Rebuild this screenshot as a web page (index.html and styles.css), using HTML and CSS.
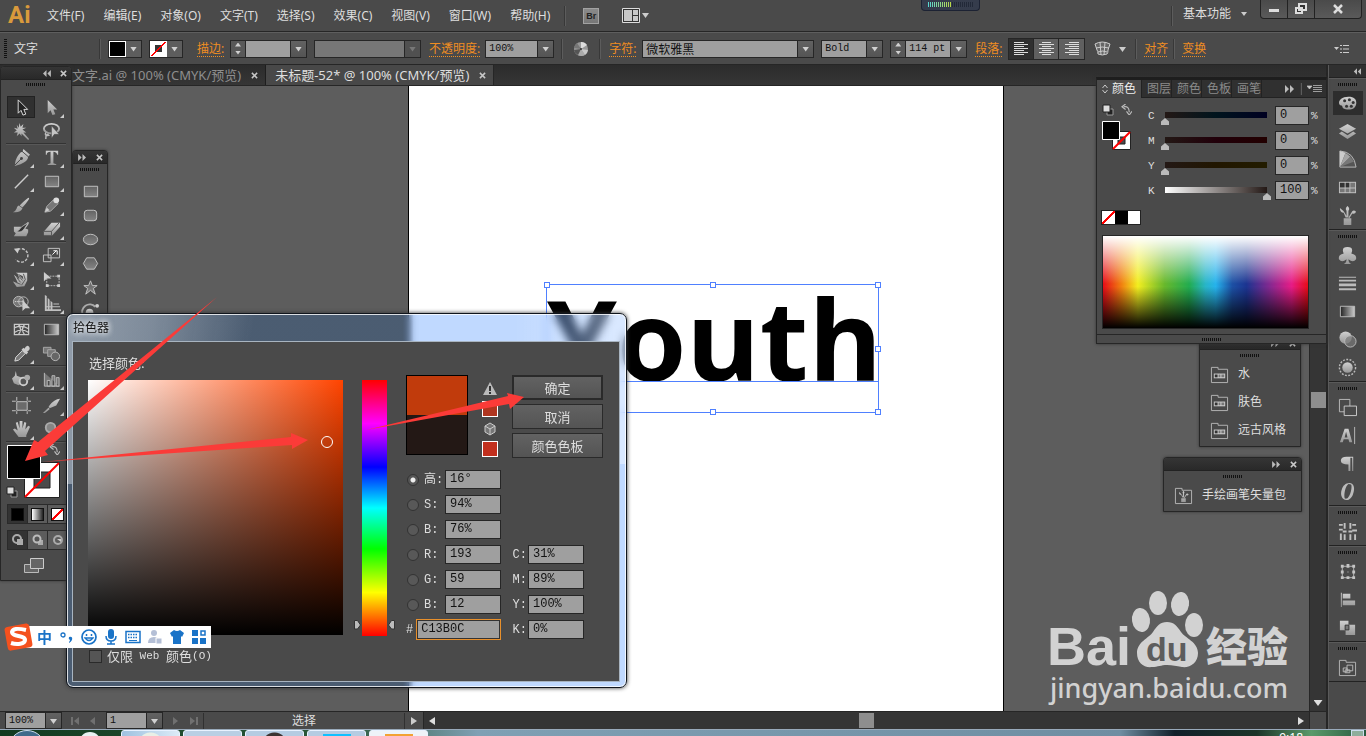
FILE: index.html
```html
<!DOCTYPE html>
<html lang="zh-CN">
<head>
<meta charset="utf-8">
<title>未标题-52* @ 100% (CMYK/预览)</title>
<link rel="stylesheet" href="styles.css">
</head>
<body>
<svg class="sprite" aria-hidden="true">
  <defs>
    <linearGradient id="g" x1="0" y1="0" x2="0" y2="1"><stop offset="0" stop-color="#d0d0d0"/><stop offset="1" stop-color="#979797"/></linearGradient>
    <linearGradient id="gh"><stop offset="0" stop-color="#222"/><stop offset="1" stop-color="#ccc"/></linearGradient>
    <linearGradient id="shade" x1="0" y1="0" x2="0" y2="1"><stop offset="0" stop-color="#626262"/><stop offset="1" stop-color="#858585"/></linearGradient>
  </defs>
  <symbol id="select" viewBox="0 0 20 20"><path d="M6.500 2v14l3-3 2 5 3-1-2-5h4z" fill="#222" stroke="#ddd"/></symbol>
  <symbol id="direct" viewBox="0 0 20 20"><path d="M6 2v14l3-3 2 5 3-1-2-5h4z" fill="url(#g)"/></symbol>
  <symbol id="wand" viewBox="0 0 20 20"><path d="M8 1l1 4 3-3-1 4h4l-4 2 4 3-3 0 6 7-1 1-7-7 0 3-2-3-3 3 1-4H2l3-2-3-3 4 1-1-4 2 3z" fill="url(#g)"/></symbol>
  <symbol id="lasso" viewBox="0 0 20 20"><ellipse cx="10" cy="7" rx="8" ry="5" fill="none" stroke="url(#g)" stroke-width="2"/><path d="M4 11q-2 4 3 3-3-3-3 4" fill="none" stroke="#bbb" stroke-width="1.500"/><path d="M10 4v13l3-4h5z" fill="#c4c4c4" stroke="#444" stroke-width=".5"/></symbol>
  <symbol id="pen" viewBox="0 0 20 20"><path d="M12 1l7 6-2 2q0 5-8 8l-6 2q0-7 4-12 2-3 4-3z" fill="url(#g)"/><path d="M3 18l7-7M10 3l7 6" stroke="#444"/><circle cx="10" cy="11" r="1.500" fill="#444"/></symbol>
  <symbol id="type" viewBox="0 0 20 20"><path d="M4 3h13v4h-1q-1-3-4-3v12l3 1v1H6v-1l3-1V4q-4 0-4 3H4z" fill="url(#g)"/></symbol>
  <symbol id="line" viewBox="0 0 20 20"><path d="M3 17L17 3" stroke="#ccc" stroke-width="1.500"/></symbol>
  <symbol id="rect" viewBox="0 0 20 20"><path d="M3.500 4.500h14v11h-14z" fill="url(#shade)" stroke="#c4c4c4"/></symbol>
  <symbol id="brush" viewBox="0 0 20 20"><path d="M18 2q1 1-7 10l-3-2Q17 1 18 2zM7 10l4 3q-2 5-10 4 3-1 4-4 0-2 2-3z" fill="url(#g)"/></symbol>
  <symbol id="pencil" viewBox="0 0 20 20"><path d="M3 17l2-6 7-7 5 4-8 8z" fill="#777" stroke="#aaa"/><circle cx="15" cy="4.500" r="3" fill="#ddd"/><path d="M3 17l2-5 3 3z" fill="#ccc"/></symbol>
  <symbol id="blob" viewBox="0 0 20 20"><path d="M2 7h8l7-5q2 1-3 7l3 1v3l-2 4H2l2-3-2-2z" fill="url(#g)"/><path d="M5 12q5 2 8-3l4-6q-8 4-10 8" fill="#333" stroke="#bbb" stroke-width=".7"/></symbol>
  <symbol id="eraser" viewBox="0 0 20 20"><path d="M2 12L10 3h9v4l-8 9H2z" fill="url(#g)"/><path d="M2 12h8l8-9M10 12v4" fill="none" stroke="#555"/></symbol>
  <symbol id="rotate" viewBox="0 0 20 20"><path d="M6 4A7 7 0 1 1 4 14" fill="none" stroke="#c4c4c4" stroke-width="1.500" stroke-dasharray="3 1.500"/><path d="M2 3l6-1-2 6z" fill="#ccc"/></symbol>
  <symbol id="scale" viewBox="0 0 20 20"><path d="M6.500 2.500h12v10h-12zM1.500 9.500h8v7h-8z" fill="none" stroke="#c4c4c4"/><path d="M11 9l4-4m-3 0h4v4" fill="none" stroke="#fff"/></symbol>
  <symbol id="warp" viewBox="0 0 20 20"><path d="M4 3h12v8l-3 6-8 1-4-6 5 2-1-3-3-6 6 5-2-6 6 6-1-5 3 3z" fill="url(#g)"/><path d="M7 6l4 5M5 8l4 5M4 13l5 2M12 4l2 6-4 6" stroke="#555" fill="none"/></symbol>
  <symbol id="freetrans" viewBox="0 0 20 20"><path d="M5 6.500h13v10H5z" fill="none" stroke="#bbb" stroke-dasharray="2 1"/><path d="M2 2v10l3-3h5z" fill="#ccc"/><path d="M4 15h3v3H4zM16 5h3v3h-3zM16 15h3v3h-3z" fill="#ccc"/></symbol>
  <symbol id="builder" viewBox="0 0 20 20"><circle cx="7" cy="8" r="5.500" fill="#777" stroke="#bbb"/><circle cx="12" cy="8" r="5" fill="none" stroke="#bbb"/><path d="M3 8h9" stroke="#eee" stroke-dasharray="1 1"/><path d="M11 6v12l3-3h5z" fill="#ccc"/></symbol>
  <symbol id="persp" viewBox="0 0 20 20"><path d="M3 1l2 1v16H3zM6 4l2 2v12H6zM9 7l2 2v9H9zM12 10h6v1h-6zM5 13h14v1H5zM3 16h17v2H3z" fill="#c0c0c0"/></symbol>
  <symbol id="mesh" viewBox="0 0 20 20"><path d="M2.500 4.500h15v11h-15zM3 8q7-3 14 1M3 13q7-5 14 0M7 5q4 5 0 10M13 5q-4 5 0 10" fill="none" stroke="#c8c8c8" stroke-width="1.300"/></symbol>
  <symbol id="gradient" viewBox="0 0 20 20"><path d="M2.500 4.500h15v11h-15z" fill="url(#gh)" stroke="#bbb"/></symbol>
  <symbol id="dropper" viewBox="0 0 20 20"><path d="M3 18l1-4 7-7 3 3-7 7z" fill="#777" stroke="#ddd"/><path d="M10 6l2-2 1 1q3-5 5-2t-2 5l1 1-2 2z" fill="#ccc"/></symbol>
  <symbol id="blend" viewBox="0 0 20 20"><path d="M1.500 3.500h8v6h-8z" fill="#777" stroke="#aaa"/><path d="M6 6h8v7H6z" fill="#777" stroke="#aaa"/><circle cx="14" cy="13" r="4.500" fill="#666" stroke="#bbb"/></symbol>
  <symbol id="bucket" viewBox="0 0 20 20"><path d="M4 1l1 5 5 2 2 5-5 3-5-2-2-5 3-3z" fill="url(#g)"/><circle cx="12" cy="12" r="4" fill="#555" stroke="#ccc" stroke-width="2"/><circle cx="16" cy="8" r="3" fill="#aaa"/></symbol>
  <symbol id="graph" viewBox="0 0 20 20"><path d="M2.500 3v14h16M5.500 11h3v6h-3zM10.500 6h3v11h-3zM15 8h3v9h-3z" fill="#777" stroke="#bbb"/></symbol>
  <symbol id="artboard" viewBox="0 0 20 20"><path d="M5 6h11v9H5zM5 1v4M16 1v4M5 16v3M16 16v3M0 5.500h4M17 5.500h3M0 15.500h4M17 15.500h3" fill="#6b6b6b" stroke="#c4c4c4"/></symbol>
  <symbol id="slice" viewBox="0 0 20 20"><path d="M19 3l-4 7-7 3-1-2q6-8 12-8zM7 12l1 2-5 4H1z" fill="url(#g)"/></symbol>
  <symbol id="hand" viewBox="0 0 20 20"><path d="M7 18L1 10l2-1 3 2-2-8 2-1 2 7V1h3v8l2-7 2 1-1 7 3-4 2 1-4 9v2z" fill="url(#g)"/></symbol>
  <symbol id="zoomtool" viewBox="0 0 20 20"><circle cx="9" cy="8" r="5" fill="#858585" stroke="#aaa" stroke-width="2"/><path d="M12 12l5 5" stroke="#aaa" stroke-width="2"/></symbol>
  <symbol id="rrect" viewBox="0 0 20 20"><rect x="3.500" y="4.500" width="13" height="11" rx="3" fill="url(#shade)" stroke="#c4c4c4"/></symbol>
  <symbol id="ellipse" viewBox="0 0 20 20"><ellipse cx="10" cy="10" rx="7.500" ry="5.500" fill="url(#shade)" stroke="#c4c4c4"/></symbol>
  <symbol id="hex" viewBox="0 0 20 20"><path d="M6 4h8l3.500 6-3.500 6H6l-3.500-6z" fill="url(#shade)" stroke="#c4c4c4"/></symbol>
  <symbol id="star" viewBox="0 0 20 20"><path d="M10 3l2 5h5l-4 3 2 6-5-4-5 4 2-6-4-3h5z" fill="url(#shade)" stroke="#c4c4c4"/></symbol>
  <symbol id="flare" viewBox="0 0 20 20"><circle cx="9" cy="11" r="4" fill="#ccc"/><path d="M2 14a8 8 0 0 1 13-9" fill="none" stroke="#aaa" stroke-width="2"/><circle cx="17" cy="4" r="2" fill="#ccc"/></symbol>
  <symbol id="palette" viewBox="0 0 20 20"><path d="M11 3c7 0 9 4 8 8-1 5-6 6-11 5s-2-4-5-4c-4-1-2-9 8-9z" fill="url(#g)"/><g fill="#333"><circle cx="7" cy="7" r="1.600"/><circle cx="12" cy="6" r="1.600"/><circle cx="16" cy="9" r="1.600"/><circle cx="14" cy="13" r="1.600"/><circle cx="9" cy="13" r="1.600"/></g></symbol>
  <symbol id="layers" viewBox="0 0 20 20"><path d="M10 2l9 5-9 5-9-5zM1 12l3-2 6 4 6-4 3 2-9 6z" fill="url(#g)"/></symbol>
  <symbol id="fan" viewBox="0 0 20 20"><path d="M2 1q15 1 17 17H2z" fill="#555" stroke="#bbb"/><path d="M2 18V1l6 2z" fill="#ccc"/><path d="M2 18L8 3l5 4z" fill="#a5a5a5"/><path d="M2 18L13 7l4 5z" fill="#777"/></symbol>
  <symbol id="grid" viewBox="0 0 20 20"><path d="M1 4h18v12H1z" fill="#c0c0c0"/><path d="M2 5h5v5H2zM8 5h4v5H8z" fill="#333"/><path d="M13 5h5v5h-5zM2 11h5v4H2zM8 11h4v4H8zM13 11h5v4h-5z" fill="#777"/></symbol>
  <symbol id="brushes" viewBox="0 0 20 20"><path d="M6 13h8v7H6zM8 12L6 7Q2 7 2 2q4 3 5 5l3 5zM9 12V5Q7 3 10 0q3 3 1 5v7zM11 12l3-5q2-4 5-1-1 3-4 2l-3 5z" fill="url(#g)"/></symbol>
  <symbol id="club" viewBox="0 0 20 20"><path d="M6 19q3-1 3-5-5 4-8 0-1-5 5-6-3-7 4-7t4 7q6 1 5 6-3 4-8 0 0 4 3 5z" fill="url(#g)"/></symbol>
  <symbol id="stroke" viewBox="0 0 20 20"><path d="M1 3h18v1H1zM1 6h18v2H1zM1 10h18v3H1zM1 15h18v2H1z" fill="#bbb"/></symbol>
  <symbol id="transp" viewBox="0 0 20 20"><circle cx="8" cy="8" r="6.500" fill="url(#g)"/><circle cx="13" cy="12" r="6" fill="#777" fill-opacity=".7" stroke="#bbb"/></symbol>
  <symbol id="appear" viewBox="0 0 20 20"><circle cx="10" cy="10" r="5.500" fill="url(#g)"/><circle cx="10" cy="10" r="8.500" fill="none" stroke="#bbb" stroke-width="1.500" stroke-dasharray="2 1.500"/></symbol>
  <symbol id="boards" viewBox="0 0 20 20"><path d="M1.500 1.500h11v13h-11z" fill="none" stroke="#bbb"/><path d="M6.500 8.500h13v10h-13z" fill="#4a4a4a" stroke="#ccc"/></symbol>
  <symbol id="char" viewBox="0 0 20 20"><path d="M2 17L7 3h4l4 14h-3l-1-3H6l-1 3zM7 12h3L8.500 6z" fill="url(#g)" fill-rule="evenodd"/><path d="M17.500 1v18" stroke="#bbb"/></symbol>
  <symbol id="para" viewBox="0 0 20 20"><path d="M9 3h7v15h-1V4h-2v14h-2v-7Q3 11 3 7t6-4z" fill="url(#g)"/></symbol>
  <symbol id="opentype" viewBox="0 0 20 20"><path fill-rule="evenodd" d="M12 1c5 0 6 6 4 11-1 4-4 7-7 7-5 0-7-6-5-11 1-4 4-7 8-7zm-1 1C8 4 6 12 7 17q1 1 3 0c3-2 5-11 4-14q-1-1-3-1z" fill="#bbb"/></symbol>
  <symbol id="sliders" viewBox="0 0 20 20"><path d="M1 3h4M1 8h4M3 12v7M7 1v6M5 10h4M7 13v6M13 1v6M11 10h4M13 13v6M15 3h4M15 9h5M18 13v6" stroke="#c0c0c0" stroke-width="2"/></symbol>
  <symbol id="transform" viewBox="0 0 20 20"><path d="M4.500 4.500h12v12h-12z" fill="none" stroke="#bbb"/><path d="M3 3h3v3H3zM9 2h3v4H9zM15 3h3v3h-3zM3 9h3v3H3zM15 9h3v3h-3zM3 15h3v3H3zM9 15h3v3H9zM15 15h3v3h-3zM10 10h1v1h-1z" fill="#c4c4c4"/></symbol>
  <symbol id="align" viewBox="0 0 20 20"><path d="M3 3h1v15H3zM5 4h8v5H5zM5 11h13v5H5z" fill="url(#g)"/></symbol>
  <symbol id="path" viewBox="0 0 20 20"><path d="M2 3h9v4h7v11H8v-5H2z" fill="url(#g)"/><path d="M7.500 7.500h4v5h-4z" fill="#777" stroke="#333"/></symbol>
  <symbol id="folder" viewBox="0 0 20 20"><path d="M1.500 18.500v-16h7v2h10v14z" fill="#484848" stroke="#b5b5b5"/></symbol>
  <symbol id="arrows-l" viewBox="0 0 10 8"><path d="M5 0v8L1 4zM10 0v8L6 4z" fill="#bbb"/></symbol>
  <symbol id="arrows-r" viewBox="0 0 10 8"><path d="M0 0v8l4-4zM5 0v8l4-4z" fill="#bbb"/></symbol>
  <symbol id="close" viewBox="0 0 8 8"><path d="M1 1l6 6M7 1L1 7" stroke="#c8c8c8" stroke-width="1.700"/></symbol>
  <symbol id="swap" viewBox="0 0 12 12"><path d="M3 3q6-1 6 6M5 0L1 3l4 3M6 8l3 4 3-4" fill="none" stroke="#bbb" stroke-width="1.300"/></symbol>
  <symbol id="default" viewBox="0 0 12 12"><path d="M5 5h6v6H5z" fill="#222" stroke="#999"/><path d="M1 1h7v7H1z" fill="#ddd" stroke="#222"/></symbol>
  <symbol id="menu" viewBox="0 0 16 10"><path d="M0 2h5L2.500 5zM6 1.500h9M6 3.500h9M6 5.500h9M6 7.500h9" fill="#ccc" stroke="#bbb" stroke-width=".8"/></symbol>
</svg>

<div class="app">
  <header class="menubar">
    <span class="logo">Ai</span>
    <nav class="menus">
      <button>文件(F)</button><button>编辑(E)</button><button>对象(O)</button><button>文字(T)</button><button>选择(S)</button><button>效果(C)</button><button>视图(V)</button><button>窗口(W)</button><button>帮助(H)</button>
    </nav>
    <i class="rule"></i>
    <button class="bridge">Br</button>
    <button class="arrange" aria-label="排列文档"><svg width="28" height="16"><path d="M.5.500h17v14H.5z" fill="#333" stroke="#ddd"/><path d="M2 2h8v11H2zM11 2h5v5h-5zM11 8h5v5h-5z" fill="#c8c8c8"/><path d="M20 5h7l-3.500 5z" fill="#ccc"/></svg></button>
    <span class="fill"></span>
    <i class="rule"></i>
    <button class="workspace">基本功能 <svg width="6" height="4"><path d="M0 0h6L3 4z" fill="#ccc"/></svg></button>
    <div class="winbtns">
      <button aria-label="最小化"><svg width="14" height="12"><path d="M2 6h10v3H2z" fill="#ddd"/></svg></button>
      <button aria-label="还原"><svg width="14" height="12"><path d="M5 1h7v6H5zM2 5h6v5H2z" fill="#333" stroke="#ddd" stroke-width="2"/></svg></button>
      <button class="wide" aria-label="关闭"><svg width="14" height="12"><path d="M3 2l8 8M11 2l-8 8" stroke="#ddd" stroke-width="2.500"/></svg></button>
    </div>
    <div class="meter"><i></i></div>
  </header>

  <section class="control">
    <i class="vgrip"></i>
    <span class="ctitle">文字</span>
    <i class="rule"></i>
    <button class="paint" aria-label="填色"><i class="chip black"></i><i class="drop"></i></button>
    <button class="paint" aria-label="描边颜色"><i class="chip none"></i><i class="drop"></i></button>
    <label class="lbl first" for="sw">描边:</label>
    <span class="spin"><i class="step"></i><span class="combo"><input id="sw" value=""></span></span>
    <span class="combo w107 off"><select aria-label="变量宽度" disabled><option></option></select></span>
    <label class="lbl" for="op">不透明度:</label>
    <span class="combo w68"><select id="op"><option>100%</option></select></span>
    <i class="rule"></i>
    <button class="wheel" aria-label="重新着色"><svg width="16" height="16" viewBox="0 0 16 16"><circle cx="8" cy="8" r="7" fill="#999"/><path d="M8 8L8 1a7 7 0 0 1 6 3z" fill="#ddd"/><path d="M8 8l7 1a7 7 0 0 1-3 5z" fill="#c8c8c8"/><path d="M8 8l4 6a7 7 0 0 1-7 0z" fill="#aaa"/><path d="M8 8l-3 6a7 7 0 0 1-4-5z" fill="#555"/><path d="M8 8L1 7a7 7 0 0 1 3-5z" fill="#777"/><circle cx="8" cy="8" r="1" fill="#333"/></svg></button>
    <i class="rule"></i>
    <label class="lbl" for="ff">字符:</label>
    <span class="combo w172 cjk"><select id="ff"><option>微软雅黑</option></select></span>
    <span class="combo w62"><select aria-label="字体样式"><option>Bold</option></select></span>
    <span class="spin"><i class="step"></i><span class="combo"><input aria-label="字体大小" value="114 pt"></span></span>
    <span class="lbl">段落:</span>
    <span class="aligns">
      <button class="on" aria-label="左对齐"><svg width="15" height="16"><path d="M0 1.500h10M0 3.500h14M0 5.500h10M0 7.500h14M0 9.500h10M0 11.500h14M0 13.500h10" stroke="#ddd"/></svg></button>
      <button aria-label="居中对齐"><svg width="15" height="16"><path d="M3 1.500h9M0 3.500h15M3 5.500h9M0 7.500h15M3 9.500h9M0 11.500h15M3 13.500h9" stroke="#ddd"/></svg></button>
      <button aria-label="右对齐"><svg width="15" height="16"><path d="M5 1.500h10M1 3.500h14M5 5.500h10M1 7.500h14M5 9.500h10M1 11.500h14M5 13.500h10" stroke="#ddd"/></svg></button>
    </span>
    <button class="envelope" aria-label="封套"><svg width="32" height="16"><path d="M1 3q7-4 15 0l-2 6q0 3-1 4-5 2-9 0 0-3-1-4zM2 7q6-2 13 0M4 11q5-2 9 0M6 1l1 13M11 1l-1 13" fill="#666" stroke="#ccc"/><path d="M25 6h7l-3.500 5z" fill="#ccc"/></svg></button>
    <i class="rule"></i>
    <a class="link" href="#align">对齐</a>
    <i class="rule tight"></i>
    <a class="link" href="#transform">变换</a>
    <span class="fill"></span>
    <button class="cmenu" aria-label="菜单"><svg width="16" height="10"><path d="M0 3h5L2.500 6z" fill="#ccc"/><path d="M6 1.500h2M9 1.500h6M6 5h2M9 5h6M6 8.500h2M9 8.500h6" stroke="#ccc"/></svg></button>
  </section>

  <main class="work">
    <div class="stage">
      <div class="tabs">
        <div class="tab old"><span>文字.ai @ 100% (CMYK/预览)</span><button aria-label="关闭"><svg width="7" height="7"><use href="#close"/></svg></button></div>
        <div class="tab"><span>未标题-52* @ 100% (CMYK/预览)</span><button aria-label="关闭"><svg width="7" height="7"><use href="#close"/></svg></button></div>
      </div>
      <div class="canvas">
        <div class="pasteboard">
          <div class="artboard">
            <div class="textbox"><span class="word">Youth</span><i class="base"></i><i class="h a"></i><i class="h b"></i><i class="h c"></i><i class="h d"></i><i class="h e"></i><i class="h f"></i><i class="h g"></i></div>
          </div>
          <svg class="mark" width="250" height="122" viewBox="0 0 250 122">
            <g fill="#d2d2d2">
              <text x="-1" y="77" class="mk-b">Bai</text>
              <g transform="translate(0 -18)">
                <ellipse cx="93" cy="50" rx="9" ry="12" transform="rotate(-8 93 50)"/><ellipse cx="110" cy="33" rx="9" ry="12"/><ellipse cx="132" cy="34" rx="9" ry="12" transform="rotate(8 132 34)"/><ellipse cx="146" cy="55" rx="9" ry="12"/>
                <path d="M119 52c7 0 10 4 14 10s17 10 17 21c0 10-8 15-16 14-6-1-9-2-15-2s-9 2-15 2c-8 1-15-4-15-14 0-11 12-15 16-21s7-10 14-10z"/>
              </g>
              <text x="158" y="74" class="mk-c">经验</text>
              <text x="2" y="110" class="mk-u">jingyan.baidu.com</text>
            </g>
            <text x="98" y="73" class="mk-d">du</text>
          </svg>
        </div>
        <div class="vscroll"><i class="thumb"></i><i class="down"></i></div>
      </div>
      <footer class="status">
        <span class="combo w57"><select aria-label="缩放"><option>100%</option></select></span>
        <button class="nav" aria-label="首个"><svg width="9" height="8"><path d="M0 0h2v8H0zM8 0v8L3 4z" fill="#707070"/></svg></button>
        <button class="nav" aria-label="上一个"><svg width="6" height="8"><path d="M5 0v8L0 4z" fill="#707070"/></svg></button>
        <span class="combo w57"><select aria-label="画板"><option>1</option></select></span>
        <button class="nav" aria-label="下一个"><svg width="6" height="8"><path d="M0 0v8l5-4z" fill="#707070"/></svg></button>
        <button class="nav" aria-label="末个"><svg width="9" height="8"><path d="M0 0v8l5-4zM6 0h2v8H6z" fill="#707070"/></svg></button>
        <span class="tip">选择</span>
        <button class="nav" aria-label="状态菜单"><svg width="6" height="8"><path d="M0 0v8l6-4z" fill="#ccc"/></svg></button>
        <div class="hscroll"><svg width="6" height="8"><path d="M6 0v8L0 4z" fill="#ddd"/></svg><i class="thumb"></i><svg width="6" height="8"><path d="M0 0v8l6-4z" fill="#ddd"/></svg></div>
        <i class="corner"></i>
      </footer>
    </div>

    <aside class="dock">
      <div class="dockhead"><svg width="8" height="7"><use href="#arrows-l"/></svg></div>
      <div class="dg"><i class="grip"></i>
        <button class="on" aria-label="颜色"><svg><use href="#palette"/></svg></button><button aria-label="图层"><svg><use href="#layers"/></svg></button><button aria-label="颜色参考"><svg><use href="#fan"/></svg></button><button aria-label="色板"><svg><use href="#grid"/></svg></button><button aria-label="画笔"><svg><use href="#brushes"/></svg></button></div>
      <div class="dg"><i class="grip"></i>
        <button aria-label="符号"><svg><use href="#club"/></svg></button><button aria-label="描边"><svg><use href="#stroke"/></svg></button><button aria-label="渐变"><svg><use href="#gradient"/></svg></button><button aria-label="透明度"><svg><use href="#transp"/></svg></button><button aria-label="外观"><svg><use href="#appear"/></svg></button></div>
      <div class="dg"><i class="grip"></i>
        <button aria-label="画板"><svg><use href="#boards"/></svg></button><button aria-label="字符"><svg><use href="#char"/></svg></button><button aria-label="段落"><svg><use href="#para"/></svg></button><button aria-label="OpenType"><svg><use href="#opentype"/></svg></button></div>
      <div class="dg"><i class="grip"></i><button aria-label="变量"><svg><use href="#sliders"/></svg></button></div>
      <div class="dg"><i class="grip"></i>
        <button aria-label="变换"><svg><use href="#transform"/></svg></button><button aria-label="对齐"><svg><use href="#align"/></svg></button><button aria-label="路径查找器"><svg><use href="#path"/></svg></button></div>
      <div class="dg"><i class="grip"></i><button aria-label="图形样式库"><svg viewBox="0 0 20 20"><use href="#folder"/><path d="M9.500 7.500h6v6h-6zM5.500 10.500h4v4h-4zM7.500 12.500h5v3h-5z" fill="none" stroke="#bbb"/></svg></button></div>
    </aside>

    <section class="panel shapes">
      <div class="phead"><svg width="9" height="7"><use href="#arrows-r"/></svg><svg width="7" height="7"><use href="#close"/></svg></div>
      <i class="grip"></i>
      <div class="shapelist"><button aria-label="矩形"><svg><use href="#rect"/></svg></button><button aria-label="圆角矩形"><svg><use href="#rrect"/></svg></button><button aria-label="椭圆"><svg><use href="#ellipse"/></svg></button><button aria-label="多边形"><svg><use href="#hex"/></svg></button><button aria-label="星形"><svg><use href="#star"/></svg></button><button aria-label="光晕"><svg><use href="#flare"/></svg></button></div>
    </section>

    <section class="panel tools">
      <div class="phead"><svg width="9" height="7"><use href="#arrows-l"/></svg><svg width="7" height="7"><use href="#close"/></svg></div>
      <i class="grip"></i>
      <div class="tg"><button class="on" aria-label="选择工具"><svg><use href="#select"/></svg></button><button class="m" aria-label="直接选择"><svg><use href="#direct"/></svg></button><button aria-label="魔棒"><svg><use href="#wand"/></svg></button><button aria-label="套索"><svg><use href="#lasso"/></svg></button></div>
      <div class="tg"><button class="m" aria-label="钢笔"><svg><use href="#pen"/></svg></button><button class="m" aria-label="文字工具"><svg><use href="#type"/></svg></button><button class="m" aria-label="直线段"><svg><use href="#line"/></svg></button><button class="m" aria-label="矩形工具"><svg><use href="#rect"/></svg></button><button aria-label="画笔工具"><svg><use href="#brush"/></svg></button><button class="m" aria-label="铅笔"><svg><use href="#pencil"/></svg></button><button aria-label="斑点画笔"><svg><use href="#blob"/></svg></button><button class="m" aria-label="橡皮擦"><svg><use href="#eraser"/></svg></button></div>
      <div class="tg"><button class="m" aria-label="旋转"><svg><use href="#rotate"/></svg></button><button class="m" aria-label="比例缩放"><svg><use href="#scale"/></svg></button><button class="m" aria-label="变形"><svg><use href="#warp"/></svg></button><button aria-label="自由变换"><svg><use href="#freetrans"/></svg></button><button class="m" aria-label="形状生成器"><svg><use href="#builder"/></svg></button><button class="m" aria-label="透视网格"><svg><use href="#persp"/></svg></button></div>
      <div class="tg"><button aria-label="网格"><svg><use href="#mesh"/></svg></button><button aria-label="渐变工具"><svg><use href="#gradient"/></svg></button><button class="m" aria-label="吸管"><svg><use href="#dropper"/></svg></button><button aria-label="混合"><svg><use href="#blend"/></svg></button></div>
      <div class="tg"><button class="m" aria-label="符号喷枪"><svg><use href="#bucket"/></svg></button><button class="m" aria-label="柱形图"><svg><use href="#graph"/></svg></button></div>
      <div class="tg"><button aria-label="画板工具"><svg><use href="#artboard"/></svg></button><button class="m" aria-label="切片"><svg><use href="#slice"/></svg></button><button class="m" aria-label="抓手"><svg><use href="#hand"/></svg></button><button aria-label="缩放工具"><svg><use href="#zoomtool"/></svg></button></div>
      <div class="fs"><svg width="58" height="56" viewBox="0 0 58 56"><path d="M18.500 18.500h35v35h-35zM28 28v16h16V28z" fill="#fff" stroke="#222" fill-rule="evenodd"/><path d="M19 53L53 19" stroke="#f00" stroke-width="2"/><path d="M1.500 1.500h33v33h-33z" fill="#000" stroke="#fff"/><use href="#swap" x="43" y="0" width="11" height="11"/><use href="#default" x="0" y="42" width="12" height="12"/></svg></div>
      <div class="modes"><button class="on" aria-label="颜色"><i class="mk"></i></button><button aria-label="渐变"><i class="mg"></i></button><button aria-label="无"><i class="mn"></i></button></div>
      <div class="modes"><button class="on" aria-label="正常绘图"><svg width="12" height="12"><circle cx="5" cy="5" r="4" fill="none" stroke="#aaa" stroke-width="2"/><path d="M5 5h6v6H5z" fill="#aaa"/></svg></button><button aria-label="背面绘图"><svg width="12" height="12"><path d="M6 6h5v5H6z" fill="#aaa"/><circle cx="5" cy="5" r="3.500" fill="#555" stroke="#bbb" stroke-width="2"/></svg></button><button aria-label="内部绘图"><svg width="12" height="12"><circle cx="6" cy="6" r="4" fill="none" stroke="#aaa" stroke-width="2"/><path d="M5 5h4v3z" fill="#ccc"/></svg></button></div>
      <button class="screen" aria-label="更改屏幕模式"><svg width="22" height="17"><path d="M1.500 7.500h14v8h-14z" fill="#666" stroke="#bbb"/><path d="M7.500 1.500h13v10h-13z" fill="#666" stroke="#ccc"/></svg></button>
    </section>

    <section class="panel lib1">
      <div class="phead"><svg width="9" height="7"><use href="#arrows-r"/></svg><svg width="7" height="7"><use href="#close"/></svg></div>
      <i class="grip"></i>
      <button><svg viewBox="0 0 20 20"><use href="#folder"/><path d="M4 9h12v5H4z" fill="#ccc"/><path d="M5 10h3v3H5z" fill="#333"/><path d="M9 10h2v3H9zM12 10h3v3h-3z" fill="#777"/></svg>水</button>
      <button><svg viewBox="0 0 20 20"><use href="#folder"/><path d="M4 9h12v5H4z" fill="#ccc"/><path d="M5 10h3v3H5z" fill="#333"/><path d="M9 10h2v3H9zM12 10h3v3h-3z" fill="#777"/></svg>肤色</button>
      <button><svg viewBox="0 0 20 20"><use href="#folder"/><path d="M4 9h12v5H4z" fill="#ccc"/><path d="M5 10h3v3H5z" fill="#333"/><path d="M9 10h2v3H9zM12 10h3v3h-3z" fill="#777"/></svg>远古风格</button>
    </section>

    <section class="panel lib2">
      <div class="phead"><svg width="9" height="7"><use href="#arrows-r"/></svg><svg width="7" height="7"><use href="#close"/></svg></div>
      <i class="grip"></i>
      <button><svg viewBox="0 0 20 20"><use href="#folder"/><use href="#brushes" x="4" y="5" width="12" height="12"/></svg>手绘画笔矢量包</button>
    </section>

    <section class="panel color">
      <div class="ptabs"><button class="on"><svg width="6" height="10"><path d="M.5 4L3 1l2.500 3M.5 6L3 9l2.500-3" fill="none" stroke="#ccc"/></svg>颜色</button><button>图层</button><button>颜色</button><button>色板</button><button>画笔</button><span class="pt-end"><svg width="10" height="8"><use href="#arrows-r"/></svg><i class="rule"></i><svg width="16" height="10"><use href="#menu"/></svg></span></div>
      <div class="cbody">
        <div class="cfs"><svg width="34" height="50" viewBox="0 0 34 50"><use href="#default" x="0" y="1" width="12" height="12"/><use href="#swap" x="19" y="1" width="11" height="11"/><path d="M10.500 28.500h18v18h-18zM16 34v7h7v-7z" fill="#fff" stroke="#222" fill-rule="evenodd"/><path d="M11 46l17-17" stroke="#f00" stroke-width="2"/><path d="M.5 18.500h17v18H.5z" fill="#000" stroke="#fff"/></svg></div>
        <div class="sliders">
          <label for="vc">C</label><input type="range" class="rc" aria-label="C" value="0"><input class="num" id="vc" value="0"><span>%</span>
          <label for="vm">M</label><input type="range" class="rm" aria-label="M" value="0"><input class="num" id="vm" value="0"><span>%</span>
          <label for="vy">Y</label><input type="range" class="ry" aria-label="Y" value="0"><input class="num" id="vy" value="0"><span>%</span>
          <label for="vk">K</label><input type="range" class="rk" aria-label="K" value="100"><input class="num" id="vk" value="100"><span>%</span>
        </div>
      </div>
      <div class="quick"><i class="none"></i><i class="black"></i><i class="white"></i></div>
      <div class="spectrum"></div>
      <div class="pfoot"><i class="grip"></i></div>
    </section>

    <section class="dialog" role="dialog" aria-labelledby="dt">
      <h2 id="dt">拾色器</h2>
      <form class="dbody">
        <div class="d-left">
          <span class="d-label">选择颜色:</span>
          <div class="square"><i class="ring"></i></div>
          <label class="web"><input type="checkbox">仅限<span class="lat"> Web </span>颜色<span class="lat">(O)</span></label>
        </div>
        <div class="hue"><svg class="hm" width="41" height="10"><path d="M.5.500h3l3 4.500-3 4h-3zM40.500.500h-3l-3 4.500 3 4h3z" fill="#bbb" stroke="#333"/></svg></div>
        <div class="d-right">
          <div class="d-top">
            <div class="compare"><i></i><i></i></div>
            <div class="warns">
              <svg width="16" height="15"><path d="M8 1l7 13H1z" fill="#bbb"/><path d="M8 5v5M8 11v2" stroke="#333" stroke-width="2"/></svg>
              <i class="w1"></i>
              <svg width="16" height="14"><path d="M8 1l5 3v6l-5 3-5-3V4z" fill="#777" stroke="#ccc"/><path d="M3 4l5 3 5-3M8 7v6" fill="none" stroke="#ccc"/></svg>
              <i class="w2"></i>
            </div>
            <div class="btns"><button type="button" class="ok">确定</button><button type="button">取消</button><button type="button">颜色色板</button></div>
          </div>
          <div class="fields">
            <input type="radio" name="m" aria-label="高" checked><label for="fh">高:</label><input class="num" id="fh" value="16°"><b></b><b></b>
            <input type="radio" name="m" aria-label="S"><label for="fS">S:</label><input class="num" id="fS" value="94%"><b></b><b></b>
            <input type="radio" name="m" aria-label="B"><label for="fv">B:</label><input class="num" id="fv" value="76%"><b></b><b></b>
            <input type="radio" name="m" aria-label="R"><label for="fr">R:</label><input class="num" id="fr" value="193"><label class="c2" for="fc">C:</label><input class="num" id="fc" value="31%">
            <input type="radio" name="m" aria-label="G"><label for="fg">G:</label><input class="num" id="fg" value="59"><label class="c2" for="fm">M:</label><input class="num" id="fm" value="89%">
            <input type="radio" name="m" aria-label="蓝"><label for="fb">B:</label><input class="num" id="fb" value="12"><label class="c2" for="fy">Y:</label><input class="num" id="fy" value="100%">
            <div class="hexrow"><label for="hx">#</label><input class="num hexin" id="hx" value="C13B0C"></div><label class="c2" for="fk">K:</label><input class="num" id="fk" value="0%">
          </div>
        </div>
      </form>
    </section>

    <section class="ime">
      <svg class="sg" width="30" height="30" viewBox="0 0 30 30"><rect x="2" y="3" width="25" height="24" rx="3" fill="#f4511e" transform="rotate(-10 15 15)"/><path d="M22 8Q9 5 8 10c0 5 13 3 13 8 0 4-8 5-14 3" fill="none" stroke="#fff" stroke-width="4"/></svg>
      <span class="zh">中</span>
      <svg width="16" height="16"><circle cx="4" cy="6" r="2" fill="none" stroke="#1a73c7" stroke-width="1.300"/><path d="M10 8q4-1 3 3-1 2-3 3v-1q1-1 1-2-2-1-1-3z" fill="#1a73c7"/></svg>
      <svg width="16" height="16"><circle cx="8" cy="8" r="7" fill="none" stroke="#1a73c7" stroke-width="1.700"/><path d="M5.500 5v2M10.500 5v2" stroke="#1a73c7" stroke-width="1.500"/><path d="M4 9q4 5 8 0z" fill="none" stroke="#1a73c7" stroke-width="1.300"/></svg>
      <svg width="16" height="16"><rect x="5" y="0" width="6" height="10" rx="3" fill="#1a73c7"/><path d="M3 7q0 5 5 5t5-5M8 12v3M4 15h8" fill="none" stroke="#1a73c7" stroke-width="1.500"/></svg>
      <svg width="16" height="16"><path d="M1 2.500h14v11H1z" fill="none" stroke="#1a73c7" stroke-width="1.500"/><path d="M3 5.500h10M3 8.500h10" stroke="#1a73c7" stroke-width="1.500" stroke-dasharray="1.500 1"/><path d="M4 11.500h8" stroke="#1a73c7"/></svg>
      <svg width="16" height="16"><circle cx="7" cy="4" r="3" fill="#b4bfd6"/><path d="M1 14q0-6 6-6t6 6z" fill="#b4bfd6"/><path d="M9 9h6v6H9z" fill="#b4bfd6" stroke="#fff"/></svg>
      <svg width="16" height="16"><path d="M5 1q3 2 6 0l4 3-2 4-1-1v8H4V7L3 8 1 4z" fill="#1a73c7"/></svg>
      <svg width="16" height="16"><path d="M1 1h6v6H1zM1 9h6v6H1zM9 9h6v6H9z" fill="#1a73c7"/><path d="M10 2h4v4h-4z" fill="none" stroke="#1a73c7" stroke-width="1.500"/></svg>
    </section>
  </main>

  <footer class="taskbar"><i class="orb"></i><i class="t0"></i><i class="t t1"></i><i class="t t2"></i><i class="t t3"></i><i class="t t4"></i><i class="t t5"></i><span class="clock">9:18</span><i class="desk"></i></footer>

  <svg class="notes" width="560" height="480" viewBox="0 0 560 480" aria-hidden="true"><g fill="#fb3b38"><path d="M217 297L38 442l-4-2-9 21 23-6-3-4z"/><path d="M42 462L291 437v-4l17 7-16 9v-4z"/><path d="M366 430L508 396l-1-3 17 4-14 12-1-5z"/></g></svg>
</div>
</body>
</html>
```
FILE: styles.css
```css
* { box-sizing: border-box; }
body { margin: 0; background: #4a4a4a; color: #dedede; font: 12px/16px "Noto Sans", "Noto Sans CJK SC", sans-serif; }
button, input, select { font: inherit; color: inherit; border: 0; border-radius: 0; padding: 0; margin: 0; background: none; }
button { display: flex; align-items: center; justify-content: center; }
i { display: block; }
svg { display: block; flex: none; }
.sprite { position: absolute; width: 0; height: 0; }
.app { position: relative; display: flex; flex-direction: column; height: 100vh; overflow: hidden; }
.fill { flex: 1; }
.rule { flex: none; width: 2px; height: 20px; background: #383838; border-right: 1px solid #5c5c5c; }

/* menu bar */
.menubar { position: relative; display: flex; align-items: center; flex: none; height: 32px; padding-left: 8px; border-bottom: 1px solid #262626; }
.logo { width: 30px; padding-bottom: 2px; color: #d99a3c; font: bold 24px/26px Roboto, sans-serif; }
.menus { display: flex; }
.menus button { padding: 0 10px 0 9px; white-space: nowrap; }
.menubar > .rule { margin: 0 10px 0 4px; }
.bridge { width: 16px; height: 16px; margin: 0 23px 0 7px; background: linear-gradient(#8a8a8a, #777); border: 1px solid #a2a2a2; color: #222; font: bold 9px/12px "Liberation Sans", sans-serif; }
.workspace { gap: 10px; margin-right: 13px; align-items: center; padding-bottom: 4px; }
.winbtns { display: flex; align-self: flex-start; height: 19px; margin-right: 4px; border: 1px solid #222; border-top: 0; border-radius: 0 0 4px 4px; background: linear-gradient(#4a4a4a, #5a5a5a); }
.winbtns button { width: 27px; border-right: 1px solid #222; }
.winbtns .wide { width: 46px; border: 0; }
.meter { position: absolute; left: 921px; top: 0; width: 59px; height: 11px; padding: 2px 6px; background: #353c4c; border: 1px solid #1c2233; border-top: 0; border-radius: 0 0 4px 4px; }
.meter i { height: 5px; background: repeating-linear-gradient(90deg, transparent 0 1px, #353c4c 1px 2px), linear-gradient(90deg, #57d6d6, #b9d94a 50%, #222938 50%); }

/* control bar */
.control { display: flex; align-items: center; gap: 7px; flex: none; height: 33px; padding: 0 16px 0 4px; border-top: 1px solid #5e5e5e; border-bottom: 1px solid #262626; white-space: nowrap; }
.vgrip { width: 3px; height: 20px; background: repeating-linear-gradient(#111 0 1px, #4a4a4a 1px 2px); }
.ctitle { width: 78px; }
.paint { width: 34px; height: 18px; border: 1px solid #262626; }
.chip { width: 17px; height: 16px; border: 1px solid #fff; }
.black { background: #000; }
.white { background: #fff; }
.none { background: linear-gradient(135deg, transparent 45%, #f00 45% 55%, transparent 55%), #fff; }
.chip.none { background: linear-gradient(135deg, transparent 45%, #f00 45% 55%, transparent 55%), linear-gradient(#333, #333) center / 7px 7px no-repeat, #fff; }
.drop { flex: 1; height: 16px; background: #5d5d5d; position: relative; }
.drop::after, .combo::after { content: ""; position: absolute; right: 4px; top: 6px; width: 7px; height: 5px; background: #d0d0d0; clip-path: polygon(0 0, 100% 0, 50% 100%); pointer-events: none; }
.lbl { margin: 0 -2px 0 1px; min-width: 28px; }
.lbl, .link { color: #ef8d22; text-decoration: none; background: repeating-linear-gradient(90deg, #ef8d22 0 1px, transparent 1px 2px) left bottom / 100% 1px no-repeat; }
.lbl.first { margin-left: 7px; }
.combo { position: relative; display: block; flex: none; height: 18px; border: 1px solid #262626; background: linear-gradient(#626262, #545454) right / 15px 100% no-repeat, #9f9f9f; color: #111; font: 10px/16px "Liberation Mono", monospace; }
.combo.cjk { font: 12px/16px "Noto Sans CJK SC", sans-serif; }
.combo select, .combo input { display: block; width: 100%; height: 100%; padding: 0 16px 0 3px; appearance: none; color: #111; border-radius: 0; outline: 0; }
.combo::before { content: ""; position: absolute; right: 15px; top: 0; bottom: 0; width: 1px; background: #262626; }
.off { background: linear-gradient(#505050, #505050) right / 15px 100% no-repeat, #777; }
.off::after { background: #777; }
.w57 { width: 57px; } .w62 { width: 62px; } .w68 { width: 69px; } .w107 { width: 107px; } .w172 { width: 172px; }
.spin { display: flex; }
.spin .combo { width: 62px; }
.step { width: 15px; height: 18px; border: 1px solid #262626; border-right: 0; background: #585858; position: relative; }
.step::before, .step::after { content: ""; position: absolute; left: 4px; top: 2px; width: 6px; height: 4px; background: #d0d0d0; clip-path: polygon(50% 0, 100% 100%, 0 100%); }
.step::after { top: 10px; clip-path: polygon(0 0, 100% 0, 50% 100%); }
.wheel { width: 22px; }
.aligns { display: flex; border: 1px solid #262626; }
.aligns button { width: 25px; height: 20px; background: #606060; border-right: 1px solid #262626; }
.aligns button:last-child { border: 0; }
.aligns .on { background: #303030; }
.envelope { width: 36px; }
.rule.tight { margin-left: -2px; }

/* work area */
.work { position: relative; display: flex; flex: 1; min-height: 0; }
.stage { display: flex; flex-direction: column; flex: 1; min-width: 0; border-right: 2px solid #262626; }
.tabs { display: flex; flex: none; height: 21px; padding-left: 66px; background: linear-gradient(#2c2c2c, #363636); border-bottom: 1px solid #262626; }
.tab { display: flex; align-items: center; gap: 10px; padding: 0 7px 0 9px; background: #484848; border-right: 1px solid #262626; white-space: nowrap; font-size: 13px; }
.tab.old { background: none; color: #8e8e8e; padding: 0 7px 0 6px; border-right-color: #1e1e1e; }
.canvas { display: flex; flex: 1; min-height: 0; }
.pasteboard { position: relative; flex: 1; background: #5d5d5d; overflow: hidden; }
.artboard { position: absolute; left: 408px; top: 0; bottom: 0; width: 596px; background: #fff; border: solid #000; border-width: 0 1px; }
.textbox { position: absolute; left: 137px; top: 198px; width: 333px; height: 129px; border: 1px solid #4f80ff; color: #000; }
.word { position: absolute; left: 0; bottom: 30px; font: bold 112px/88px "Open Sans", sans-serif; }
.base { position: absolute; left: 0; right: 0; top: 96px; height: 1px; background: #4f80ff; }
.h { position: absolute; width: 6px; height: 6px; margin: -3px; background: #fff; border: 1px solid #4f80ff; }
.a { left: 0; top: 0; } .b { left: 50%; top: 0; } .c { left: 100%; top: 0; } .d { left: 100%; top: 50%; } .e { left: 100%; top: 100%; } .f { left: 50%; top: 100%; } .g { left: 0; top: 100%; }
.mark { position: absolute; left: 1048px; bottom: 1px; }
.mk-b { font: bold 54px "Liberation Sans", sans-serif; }
.mk-c { font: 900 41px "Noto Sans CJK SC", sans-serif; }
.mk-u { font: 500 27px "Noto Sans", sans-serif; }
.mk-d { font: bold 34px "Liberation Sans", sans-serif; fill: #5d5d5d; }
.vscroll { flex: none; width: 17px; background: #353535; border-left: 1px solid #262626; display: flex; flex-direction: column; justify-content: space-between; align-items: center; }
.thumb { background: #8e8e8e; }
.vscroll .thumb { width: 15px; height: 16px; margin-top: 306px; }
.down { width: 9px; height: 6px; margin-bottom: 5px; background: #ddd; clip-path: polygon(0 0, 100% 0, 50% 100%); }
.status { display: flex; align-items: center; flex: none; height: 18px; padding-left: 5px; border-top: 1px solid #262626; }
.status .combo { height: 17px; }
.nav { width: 18px; height: 16px; }
.status .combo + .nav { margin-left: 4px; }
.status .nav + .combo { margin-left: 4px; }
.tip { width: 202px; text-align: center; border: solid #303030; border-width: 0 1px; }
.hscroll { display: flex; align-items: center; justify-content: space-between; flex: 1; height: 17px; padding: 0 5px; background: #353535; border-left: 1px solid #262626; }
.hscroll .thumb { width: 15px; height: 15px; }
.corner { width: 17px; height: 17px; border-left: 1px solid #262626; }

/* dock */
.dock { flex: none; width: 38px; background: #4a4a4a; border-left: 1px solid #5a5a5a; }
.dockhead { display: flex; justify-content: flex-end; align-items: center; height: 13px; padding-right: 5px; background: #303030; border-bottom: 1px solid #222; }
.grip { width: 20px; height: 3px; margin: 4px auto 3px; background: repeating-linear-gradient(90deg, #111 0 1px, #4a4a4a 1px 2px); flex: none; }
.dg { border-bottom: 1px solid #222; border-top: 1px solid #5a5a5a; display: flex; flex-direction: column; align-items: center; }
.dg .grip { margin: 4px auto 3px; }
.dg button { width: 30px; height: 28px; }
.dg button.on { background: linear-gradient(#2d2d2d, #2d2d2d) center / 100% 24px no-repeat; }
.dg svg { width: 19px; height: 19px; }

/* floating panels */
.panel { position: absolute; background: #4a4a4a; border: 1px solid #262626; border-radius: 4px 4px 0 0; box-shadow: 0 0 3px #333; }
.phead { display: flex; align-items: center; justify-content: flex-end; gap: 9px; height: 13px; padding-right: 4px; background: linear-gradient(#353535, #292929); border-bottom: 1px solid #222; border-radius: 3px 3px 0 0; }
.tools { left: 0; top: 1px; width: 72px; padding-bottom: 6px; }
.tools > .grip { margin: 3px auto 9px 25px; }
.tg { display: grid; grid-template-columns: 30px 30px; grid-auto-rows: 24px; margin: 0 5px 1px; border-bottom: 1px solid #333; box-shadow: 0 1px #585858; }
.tg button { position: relative; }
.tg svg, .shapelist svg { width: 19px; height: 19px; }
.tg .on { background: #303030; border: 1px solid #222; margin: 1px; }
.m::after { content: ""; position: absolute; right: 2px; bottom: 1px; width: 4px; height: 4px; background: #ccc; clip-path: polygon(100% 0, 100% 100%, 0 100%); }
.fs { margin: 2px 0 0 5px; }
.modes { display: grid; grid-template-columns: repeat(3, 20px); width: 62px; margin: 4px 0 0 6px; border: 1px solid #2a2a2a; }
.modes button { height: 18px; background: #5c5c5c; border-right: 1px solid #2a2a2a; }
.modes .on { background: #333; }
.modes + .modes { margin-top: 6px; }
.modes i { width: 13px; height: 13px; border: 1px solid #111; }
.mk { background: #000; } .mg { background: linear-gradient(90deg, #fff, #222); } .mn { background: linear-gradient(135deg, transparent 45%, #f00 45% 55%, transparent 55%), #fff; }
.screen { margin: 7px auto 0 22px; }
.shapes { left: 72px; top: 85px; width: 36px; }
.shapelist { display: flex; flex-direction: column; align-items: center; padding-top: 5px; }
.shapelist button { height: 24px; }
.lib1 { right: 65px; top: 271px; width: 102px; padding-bottom: 2px; }
.lib2 { right: 64px; top: 392px; width: 139px; padding-bottom: 2px; }
.lib1 button, .lib2 button { gap: 9px; height: 28px; margin-left: 10px; }
.lib1 button svg, .lib2 button svg { width: 19px; height: 19px; }
.color { right: 39px; top: 12px; width: 231px; border-top: 3px solid #1e1e1e; border-radius: 0; }
.ptabs { display: flex; height: 18px; background: #303030; }
.ptabs button { width: 30px; color: #8b8b8b; border-right: 1px solid #222; overflow: hidden; justify-content: flex-end; white-space: nowrap; font-size: 12px; border-bottom: 1px solid #222; }
.ptabs .on { width: 45px; gap: 4px; justify-content: center; background: #4a4a4a; color: #eee; border-bottom: 0; }
.pt-end { display: flex; align-items: center; justify-content: flex-end; gap: 5px; flex: 1; padding-right: 3px; border-bottom: 1px solid #222; }
.pt-end .rule { height: 12px; }
.cbody { display: flex; justify-content: space-between; padding: 5px 6px 0 5px; }
.sliders { display: grid; grid-template-columns: 11px 112px 34px 9px; grid-auto-rows: 25px; column-gap: 2px; align-items: center; font: 11px/16px "Liberation Mono", monospace; }
.num { height: 19px; width: 100%; padding: 0 0 2px 4px; background: #9f9f9f; border: 1px solid #262626; color: #111; outline: 0; font: 12px/14px "Liberation Mono", monospace; }
input[type=range] { appearance: none; width: 110px; height: 19px; background-repeat: no-repeat; background-position: center 6px; background-size: 102px 6px; }
input[type=range]::-webkit-slider-thumb { appearance: none; width: 8px; height: 7px; margin-top: 12px; background: #bbb; clip-path: polygon(50% 0, 100% 50%, 100% 100%, 0 100%, 0 50%); }
.rc { background-image: linear-gradient(90deg, #231815, #00141d 50%, #000021); }
.rm { background-image: linear-gradient(90deg, #231815, #21000a 50%, #220000); }
.ry { background-image: linear-gradient(90deg, #231815, #211600 50%, #221c00); }
.rk { background-image: linear-gradient(90deg, #fff, #231815); }
.quick { display: flex; width: 40px; margin: 7px 0 0 4px; border: 1px solid #222; }
.quick i { flex: 1; height: 13px; }
.quick .none { flex: none; width: 13px; }
.spectrum { height: 94px; margin: 10px 17px 5px 5px; border: 1px solid #262626; background: linear-gradient(#fff, rgba(255,255,255,0) 52%, rgba(0,0,0,0) 55%, #000), linear-gradient(90deg, #e60c18, #f08010 9%, #f2ee20 17%, #68b82c 30%, #22ac50 42%, #28b5c8 50%, #26b2ec 55%, #1c50a4 63%, #1c3490 70%, #8a2890 82%, #e61c86 92%, #e60c18); }
.pfoot { height: 9px; border-top: 1px solid #262626; overflow: hidden; }
.pfoot .grip { margin: 3px auto; }

/* colour picker */
.dialog { position: absolute; left: 66px; top: 248px; width: 561px; padding: 0 6px 5px 5px; border: 1px solid #10151c; border-radius: 7px; background: linear-gradient(100deg, rgba(220,225,230,.5), rgba(220,225,230,.35) 15%, transparent 32%) top / 100% 170px no-repeat, linear-gradient(90deg, transparent 80%, rgba(255,255,255,.4) 98%) top / 100% 150px no-repeat, linear-gradient(90deg, rgba(74,90,108,.85) 60%, transparent 62%), rgba(45,128,255,.3); backdrop-filter: blur(4px); box-shadow: inset 0 0 0 1px rgba(255,255,255,.8), 0 0 4px #333; }
.dialog h2 { margin: 0; height: 27px; padding: 5px 1px; color: #111; font: 12px/16px "Noto Sans CJK SC", sans-serif; text-shadow: 0 0 6px #fff, 0 0 6px #fff; }
.dbody { display: flex; padding: 0 16px 17px 15px; background: #4a4a4a; border: 1px solid #a8b4c0; font: 13px/16px "Noto Sans CJK SC", sans-serif; }
.d-left { width: 255px; }
.d-label { display: block; height: 38px; padding: 13px 1px; }
.square { position: relative; height: 255px; background: linear-gradient(transparent, #000), linear-gradient(90deg, #fff, #ff4400); }
.ring { position: absolute; left: 233px; top: 56px; width: 12px; height: 12px; border: 1px solid #fff; border-radius: 50%; }
.web { display: flex; align-items: center; margin-top: 13px; white-space: pre; }
.web input { appearance: none; width: 13px; height: 13px; margin: 0 5px 0 1px; background: #555; border: 1px solid #2a2a2a; }
.lat { font: 11px/16px "Liberation Mono", monospace; }
.hue { position: relative; width: 25px; height: 256px; margin: 38px 19px 0; background: linear-gradient(#f00, #f0f 17%, #00f 34%, #0ff 50%, #0f0 66%, #ff0 83%, #f00); }
.hm { position: absolute; left: -8px; bottom: 6px; }
.d-right { padding-top: 33px; }
.d-top { display: flex; gap: 14px; }
.compare { width: 62px; height: 80px; border: 1px solid #000; }
.compare i { height: 39px; background: #c13b0c; }
.compare i + i { background: #231815; }
.warns { display: flex; flex-direction: column; align-items: center; justify-content: space-between; height: 76px; margin-top: 6px; }
.warns i { width: 16px; height: 16px; border: 1px solid #fff; background: #b03620; }
.warns .w2 { background: #c2301e; }
.btns { display: flex; flex-direction: column; gap: 4px; }
.btns button { width: 91px; height: 25px; background: linear-gradient(#626262, #545454); border: 1px solid #2a2a2a; }
.btns .ok { border-width: 2px; }
.fields { display: grid; grid-template-columns: 18px 21px 56px 27px 56px; grid-auto-rows: 25px; align-items: center; margin-top: 9px; }
.fields label { font-family: "Liberation Mono", "Noto Sans CJK SC", monospace; font-size: 12px; white-space: nowrap; }
.fields .c2 { text-align: right; padding-right: 1px; }
.fields input[type=radio] { appearance: none; width: 12px; height: 12px; margin-left: 1px; border: 1px solid #333; border-radius: 50%; background: #585858; }
.fields input[type=radio]:checked { background: radial-gradient(#eee 0 2px, #555 3px); }
.hexrow { grid-column: span 3; display: flex; align-items: center; gap: 3px; }
.hexin { flex: 1; height: 21px; border-color: #e8902c; box-shadow: inset 0 0 0 1px #333; }

/* input method bar */
.ime { position: absolute; left: 4px; top: 560px; display: flex; align-items: center; gap: 6px; height: 24px; padding-right: 4px; background: linear-gradient(90deg, transparent 15px, #fff 15px) center / 100% 22px no-repeat; }
.sg { margin-right: -3px; }
.zh { width: 16px; color: #1a73c7; font: bold 15px/20px "Noto Sans CJK SC", sans-serif; }

/* taskbar */
.taskbar { display: flex; flex: none; height: 7px; padding: 0 2px 0 8px; border-top: 1px solid #9ab; background: linear-gradient(90deg, #123a20, #2a5a3a 25%, #7fa0b4 35%, #6f8ea2 82%, #12202a 86%, #1c3428 92%, #5a9a6a 96%, #2a5a40); overflow: hidden; }
.orb { width: 38px; height: 38px; border-radius: 50%; background: #3f6b8a; border: 1px solid #cde; flex: none; }
.t0 { width: 22px; height: 22px; margin: 2px 20px 0 33px; border-radius: 50%; background: #e8f2f2; flex: none; }
.t { flex: none; width: 59px; height: 12px; margin-right: 3px; border: 1px solid #e8f2ff; border-radius: 3px; background: radial-gradient(circle at 50% 14px, #e9efe6 12px, transparent 13px), linear-gradient(90deg, #9fc2e0, #dcebf7); }
.t2 { background: #b9cfe4; }
.t3 { background: radial-gradient(circle at 50% 14px, #3c3432 12px, transparent 13px), #b5cce2; }
.t4 { background: linear-gradient(#10c0ff, #10c0ff) center 3px / 28px 9px no-repeat, #b5cce2; }
.t5 { background: linear-gradient(#f2a233, #f2a233) center 3px / 28px 9px no-repeat, #eef3f8; }
.clock { margin-left: auto; color: #fff; padding-right: 48px; line-height: 16px; font-size: 12px; }
.desk { width: 13px; height: 12px; border: 1px solid #cde; background: #8fae9c; }

.notes { position: absolute; left: 0; top: 0; pointer-events: none; }
```
